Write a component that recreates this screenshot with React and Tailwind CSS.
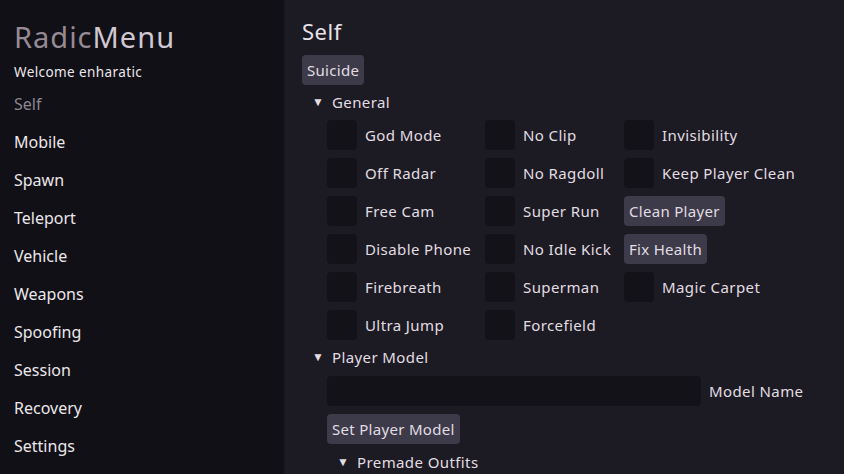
import React from 'react';

const NAV = ['Mobile', 'Spawn', 'Teleport', 'Vehicle', 'Weapons', 'Spoofing', 'Session', 'Recovery', 'Settings'];

const ROWS = [
  [{ t: 'check', label: 'God Mode' }, { t: 'check', label: 'No Clip' }, { t: 'check', label: 'Invisibility' }],
  [{ t: 'check', label: 'Off Radar' }, { t: 'check', label: 'No Ragdoll' }, { t: 'check', label: 'Keep Player Clean' }],
  [{ t: 'check', label: 'Free Cam' }, { t: 'check', label: 'Super Run' }, { t: 'button', label: 'Clean Player' }],
  [{ t: 'check', label: 'Disable Phone' }, { t: 'check', label: 'No Idle Kick' }, { t: 'button', label: 'Fix Health' }],
  [{ t: 'check', label: 'Firebreath' }, { t: 'check', label: 'Superman' }, { t: 'check', label: 'Magic Carpet' }],
  [{ t: 'check', label: 'Ultra Jump' }, { t: 'check', label: 'Forcefield' }, null],
];

function Button({ children, className = '' }) {
  return (
    <button type="button" className={`block h-[30px] px-[5px] rounded-[4px] bg-[#3d3b49] text-[#e2dde2] text-[15px] tracking-[0.3px] leading-none whitespace-nowrap ${className}`}>
      {children}
    </button>
  );
}

function Check({ label }) {
  return (
    <div className="flex items-center h-[30px]">
      <div className="w-[30px] h-[30px] rounded-[4px] bg-[#131218] shrink-0" />
      <span className="ml-[8px] text-[15px] tracking-[0.4px] text-[#e2dde2] whitespace-nowrap">{label}</span>
    </div>
  );
}

function Tree({ label, className = '' }) {
  return (
    <div className={`flex items-center h-[22px] ${className}`}>
      <span className="text-[12px] text-[#e2dde2] w-[20px]">▼</span>
      <span className="text-[15px] tracking-[0.4px] text-[#e2dde2]">{label}</span>
    </div>
  );
}

export default function App() {
  return (
    <div className="w-[844px] h-[474px] overflow-hidden flex bg-[#1c1b23] font-['Noto_Sans',sans-serif]">
      {/* Sidebar */}
      <div className="w-[286px] h-full bg-[#111016] border-r-[2px] border-[#1a1920] shrink-0 pl-[14px]">
        <div className="pt-[19px] text-[29px] leading-[36px] tracking-[1px]">
          <span className="text-[#968a94]">Radic</span>
          <span className="text-[#cfc8d0]">Menu</span>
        </div>
        <div className="mt-[8px] text-[13.5px] leading-[18px] tracking-[0.4px] text-[#ebe7eb]">Welcome enharatic</div>
        <div className="mt-[12px] text-[16px] leading-[22px] text-[#8b8690]">Self</div>
        {NAV.map((n) => (
          <div key={n} className="mt-[16px] text-[16px] leading-[22px] text-[#ebe7eb]">{n}</div>
        ))}
      </div>

      {/* Main */}
      <div className="flex-1 pl-[16px] pt-[17px] flex flex-col items-start">
        <div className="text-[22px] leading-[28px] tracking-[0.5px] text-[#e8e3e8]">Self</div>
        <Button className="mt-[10px] h-[28px]">Suicide</Button>
        <Tree label="General" className="mt-[6px] pl-[10px]" />
        <div className="mt-[7px] pl-[25px] flex flex-col gap-[8px]">
          {ROWS.map((row, i) => (
            <div key={i} className="grid grid-cols-[158px_139px_auto]">
              {row.map((c, j) =>
                c == null ? <div key={j} /> : c.t === 'check' ? <Check key={j} label={c.label} /> : (
                  <div key={j}><Button>{c.label}</Button></div>
                )
              )}
            </div>
          ))}
        </div>
        <Tree label="Player Model" className="mt-[6px] pl-[10px]" />
        <div className="mt-[8px] pl-[25px] flex items-center">
          <div className="w-[374px] h-[30px] rounded-[4px] bg-[#131218]" />
          <span className="ml-[8px] text-[15px] tracking-[0.4px] text-[#e2dde2]">Model Name</span>
        </div>
        <div className="mt-[8px] pl-[25px]">
          <Button>Set Player Model</Button>
        </div>
        <Tree label="Premade Outfits" className="mt-[7px] pl-[35px]" />
      </div>
    </div>
  );
}
